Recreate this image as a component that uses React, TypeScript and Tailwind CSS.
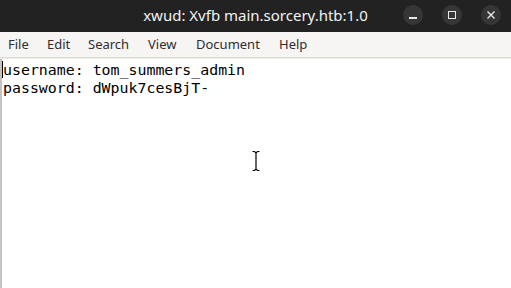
import React from "react";

export default function App() {
  return (
    <div className="w-[511px] h-[288px] flex flex-col bg-white overflow-hidden" style={{}}>
      {/* Title bar */}
      <div className="h-[32px] bg-[#222222] flex items-center relative shrink-0">
        <div className="flex-1 text-center text-[15px] text-[#f2f2f2] font-['Noto_Sans',sans-serif] leading-none pb-[1px]">
          xwud: Xvfb main.sorcery.htb:1.0
        </div>
        <div className="absolute right-[10px] top-[5px] flex gap-[19px]">
          <div className="w-[20px] h-[20px] rounded-full bg-[#363636] flex items-center justify-center">
            <div className="w-[8px] h-[1.5px] bg-[#e8e8e8] mt-[6px]" />
          </div>
          <div className="w-[20px] h-[20px] rounded-full bg-[#363636] flex items-center justify-center">
            <div className="w-[8px] h-[8px] border-[1.5px] border-[#e8e8e8]" />
          </div>
          <div className="w-[20px] h-[20px] rounded-full bg-[#363636] flex items-center justify-center">
            <svg width="10" height="10" viewBox="0 0 10 10">
              <path d="M1.5 1.5 L8.5 8.5 M8.5 1.5 L1.5 8.5" stroke="#e8e8e8" strokeWidth="1.4" />
            </svg>
          </div>
        </div>
      </div>
      {/* Menu bar */}
      <div className="h-[25px] bg-[#f6f5f4] flex items-center pl-[8px] gap-[0px] text-[13px] text-[#2e2e2e] font-['Noto_Sans',sans-serif] shrink-0 pt-[1px]">
        <span className="w-[39px]">File</span>
        <span className="w-[41px]">Edit</span>
        <span className="w-[60px]">Search</span>
        <span className="w-[48px]">View</span>
        <span className="w-[83px]">Document</span>
        <span>Help</span>
      </div>
      <div className="h-[1px] bg-[#dcd9d5] shrink-0" />
      <div className="h-[1px] bg-[#efedeb] shrink-0" />
      {/* Text area */}
      <div className="flex-1 flex relative">
        <div className="w-[2px] bg-[#c6c2bd]" />
        <div className="flex-1 pl-[1px] pt-[2px] font-['DejaVu_Sans_Mono',monospace] text-[14.9px] leading-[18px] text-black relative">
          <div className="absolute left-[0px] top-[2px] w-[1px] h-[17px] bg-black" />
          <div className="whitespace-pre">username: tom_summers_admin</div>
          <div className="whitespace-pre">password: dWpuk7cesBjT-</div>
          <div className="absolute left-[249px] top-[91px]">
            <svg width="10" height="22" viewBox="0 0 10 22">
              <path d="M1.5 1.5 H3.5 L5 3 L6.5 1.5 H8.5 M5 3 V19 M1.5 20.5 H3.5 L5 19 L6.5 20.5 H8.5" stroke="#ffffff" strokeWidth="3" fill="none" opacity="0.9" />
              <path d="M1.5 1.5 H3.5 L5 3 L6.5 1.5 H8.5 M5 3 V19 M1.5 20.5 H3.5 L5 19 L6.5 20.5 H8.5" stroke="#000000" strokeWidth="1.2" fill="none" />
            </svg>
          </div>
        </div>
      </div>
    </div>
  );
}
